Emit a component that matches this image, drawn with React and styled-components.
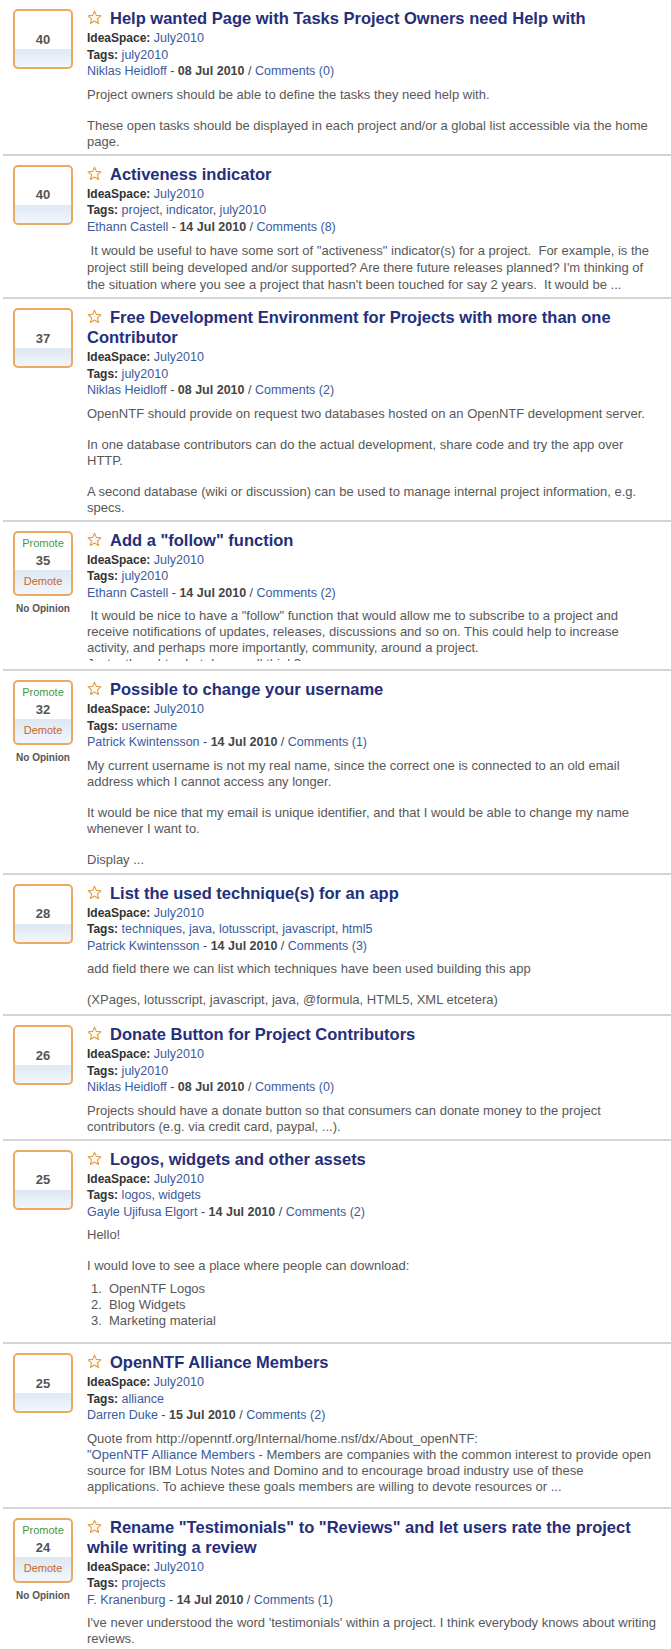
import React from "react";
import styled, { createGlobalStyle } from "styled-components";

const GlobalStyle = createGlobalStyle`
  html, body {
    margin: 0;
    padding: 0;
    background: #fff;
  }
  body {
    font-family: "Liberation Sans", Arial, sans-serif;
  }
`;

const List = styled.ul`
  list-style: none;
  margin: 0 0 0 3px;
  padding: 0;
`;

const Item = styled.li`
  display: flex;
  padding: 8px 14px 4px 0;
  border-bottom: 2px solid #d4d4d4;
`;

const VoteCol = styled.div`
  flex-shrink: 0;
  width: 60px;
  margin: 1px 14px 0 10px;
  display: flex;
  flex-direction: column;
  align-items: center;
`;

const VoteBox = styled.div`
  box-sizing: border-box;
  width: 60px;
  height: ${(p) => (p.$promo ? 65 : 60)}px;
  border: 2px solid #eaa964;
  border-radius: 5px;
  display: flex;
  flex-direction: column;
  background: linear-gradient(
    to bottom,
    #fff 0,
    #fff ${(p) => (p.$promo ? 37 : 38)}px,
    #dde8f3 ${(p) => (p.$promo ? 37 : 38)}px,
    #f1f6fb 100%
  );
`;

const Score = styled.div`
  flex: ${(p) => (p.$promo ? "0 0 auto" : "1")};
  display: flex;
  align-items: center;
  justify-content: center;
  font-size: 13px;
  line-height: 19px;
  font-weight: bold;
  color: #555;
`;

const VoteLink = styled.div`
  text-align: center;
  font-size: 11px;
  line-height: 16px;
  padding-top: ${(p) => (p.$kind === "up" ? "2px" : "3px")};
  color: ${(p) => (p.$kind === "up" ? "#3f9b3f" : "#c8652e")};
`;

const NoOpinion = styled.div`
  margin-top: 6px;
  font-size: 10px;
  line-height: 13px;
  font-weight: bold;
  color: #555;
  white-space: nowrap;
`;

const Content = styled.div`
  flex: 1;
  min-width: 0;
`;

const Title = styled.h2`
  margin: 0;
  font-size: 16.5px;
  line-height: 20px;
  font-weight: bold;
  color: #252e7a;
`;

const StarIcon = styled.svg`
  width: 15px;
  height: 15px;
  margin-right: 8px;
  vertical-align: -1px;
`;

const Meta = styled.div`
  margin-top: 2px;
  font-size: 12.5px;
  line-height: 16.5px;
  color: #444;
`;

const Label = styled.b`
  font-size: 12px;
  color: #333;
`;

const Link = styled.a`
  color: #3b5a9e;
  text-decoration: none;
`;

const DateText = styled.b`
  color: #444;
`;

const Body = styled.div`
  margin: 7px 0 ${(p) => p.$after || 0}px;
  font-size: 13px;
  line-height: ${(p) => p.$lh || 16}px;
  color: #585858;
  max-height: ${(p) => (p.$clip ? `${p.$clip}px` : "none")};
  overflow: hidden;
`;

const Para = styled.p`
  margin: 0 0 ${(p) => (p.$tight ? 7 : 15)}px;
  &:last-child {
    margin-bottom: 0;
  }
`;

const OList = styled.ol`
  list-style: none;
  counter-reset: num;
  margin: 0 0 9px;
  padding: 0;
`;

const OItem = styled.li`
  counter-increment: num;
  &:before {
    content: counter(num) ".";
    display: inline-block;
    width: 18px;
    padding-left: 4px;
  }
`;

const Star = () => (
  <StarIcon viewBox="0 0 24 24">
    <polygon
      points="12,1.8 14.9,8.6 22.3,9.3 16.7,14.2 18.4,21.5 12,17.7 5.6,21.5 7.3,14.2 1.7,9.3 9.1,8.6"
      fill="#fffdf3"
      stroke="#e39b3e"
      strokeWidth="1.7"
      strokeLinejoin="round"
    />
  </StarIcon>
);

const Tags = ({ tags }) => (
  <>
    {tags.map((t, i) => (
      <React.Fragment key={t}>
        {i > 0 && ", "}
        <Link href="#">{t}</Link>
      </React.Fragment>
    ))}
  </>
);

const ideas = [
  {
    score: 40,
    title: "Help wanted Page with Tasks Project Owners need Help with",
    tags: ["july2010"],
    author: "Niklas Heidloff",
    date: "08 Jul 2010",
    comments: 0,
    body: (
      <>
        <Para>Project owners should be able to define the tasks they need help with.</Para>
        <Para>
          These open tasks should be displayed in each project and/or a global list accessible via the home page.
        </Para>
      </>
    ),
  },
  {
    score: 40,
    title: "Activeness indicator",
    tags: ["project", "indicator", "july2010"],
    author: "Ethann Castell",
    date: "14 Jul 2010",
    comments: 8,
    lh: 17,
    body: (
      <Para>
        {"\u00a0It would be useful to have some sort of \"activeness\" indicator(s) for a project.\u00a0 For example, is the project still being developed and/or supported? Are there future releases planned? I'm thinking of the situation where you see a project that hasn't been touched for say 2 years.\u00a0 It would be ..."}
      </Para>
    ),
  },
  {
    score: 37,
    title: "Free Development Environment for Projects with more than one Contributor",
    tags: ["july2010"],
    author: "Niklas Heidloff",
    date: "08 Jul 2010",
    comments: 2,
    body: (
      <>
        <Para>OpenNTF should provide on request two databases hosted on an OpenNTF development server.</Para>
        <Para>In one database contributors can do the actual development, share code and try the app over HTTP.</Para>
        <Para>A second database (wiki or discussion) can be used to manage internal project information, e.g. specs.</Para>
      </>
    ),
  },
  {
    score: 35,
    promo: true,
    title: "Add a \"follow\" function",
    tags: ["july2010"],
    author: "Ethann Castell",
    date: "14 Jul 2010",
    comments: 2,
    clip: 53,
    after: 4,
    body: (
      <Para>
        {"\u00a0It would be nice to have a \"follow\" function that would allow me to subscribe to a project and receive notifications of updates, releases, discussions and so on. This could help to increase activity, and perhaps more importantly, community, around a project."}
        <br />
        Just a thought, what do you all think?
      </Para>
    ),
  },
  {
    score: 32,
    promo: true,
    title: "Possible to change your username",
    tags: ["username"],
    author: "Patrick Kwintensson",
    date: "14 Jul 2010",
    comments: 1,
    after: 1,
    body: (
      <>
        <Para>
          My current username is not my real name, since the correct one is connected to an old email address which I cannot access any longer.
        </Para>
        <Para>
          It would be nice that my email is unique identifier, and that I would be able to change my name whenever I want to.
        </Para>
        <Para>Display ...</Para>
      </>
    ),
  },
  {
    score: 28,
    title: "List the used technique(s) for an app",
    tags: ["techniques", "java", "lotusscript", "javascript", "html5"],
    author: "Patrick Kwintensson",
    date: "14 Jul 2010",
    comments: 3,
    after: 2,
    body: (
      <>
        <Para>add field there we can list which techniques have been used building this app</Para>
        <Para>(XPages, lotusscript, javascript, java, @formula, HTML5, XML etcetera)</Para>
      </>
    ),
  },
  {
    score: 26,
    title: "Donate Button for Project Contributors",
    tags: ["july2010"],
    author: "Niklas Heidloff",
    date: "08 Jul 2010",
    comments: 0,
    body: (
      <Para>
        Projects should have a donate button so that consumers can donate money to the project contributors (e.g. via credit card, paypal, ...).
      </Para>
    ),
  },
  {
    score: 25,
    title: "Logos, widgets and other assets",
    tags: ["logos", "widgets"],
    author: "Gayle Ujifusa Elgort",
    date: "14 Jul 2010",
    comments: 2,
    body: (
      <>
        <Para>Hello!</Para>
        <Para $tight>I would love to see a place where people can download:</Para>
        <OList>
          <OItem>OpenNTF Logos</OItem>
          <OItem>Blog Widgets</OItem>
          <OItem>Marketing material</OItem>
        </OList>
      </>
    ),
  },
  {
    score: 25,
    title: "OpenNTF Alliance Members",
    tags: ["alliance"],
    author: "Darren Duke",
    date: "15 Jul 2010",
    comments: 2,
    after: 8,
    body: (
      <Para>
        Quote from http://openntf.org/Internal/home.nsf/dx/About_openNTF:
        <br />
        <Link href="#">"OpenNTF Alliance Members</Link> - Members are companies with the common interest to provide open
        source for IBM Lotus Notes and Domino and to encourage broad industry use of these applications. To achieve these
        goals members are willing to devote resources or ...
      </Para>
    ),
  },
  {
    score: 24,
    promo: true,
    title: "Rename \"Testimonials\" to \"Reviews\" and let users rate the project while writing a review",
    tags: ["projects"],
    author: "F. Kranenburg",
    date: "14 Jul 2010",
    comments: 1,
    body: (
      <Para>
        I've never understood the word 'testimonials' within a project. I think everybody knows about writing reviews.
      </Para>
    ),
  },
];

const Vote = ({ score, promo }) => (
  <VoteCol>
    <VoteBox $promo={promo}>
      {promo && <VoteLink $kind="up">Promote</VoteLink>}
      <Score $promo={promo}>{score}</Score>
      {promo && <VoteLink $kind="down">Demote</VoteLink>}
    </VoteBox>
    {promo && <NoOpinion>No Opinion</NoOpinion>}
  </VoteCol>
);

export default function App() {
  return (
    <>
      <GlobalStyle />
      <List>
        {ideas.map((idea, i) => (
          <Item key={i}>
            <Vote score={idea.score} promo={idea.promo} />
            <Content>
              <Title>
                <Star />
                {idea.title}
              </Title>
              <Meta>
                <div>
                  <Label>IdeaSpace:</Label> <Link href="#">July2010</Link>
                </div>
                <div>
                  <Label>Tags:</Label> <Tags tags={idea.tags} />
                </div>
                <div>
                  <Link href="#">{idea.author}</Link> - <DateText>{idea.date}</DateText> /{" "}
                  <Link href="#">Comments ({idea.comments})</Link>
                </div>
              </Meta>
              <Body $lh={idea.lh} $clip={idea.clip} $after={idea.after}>
                {idea.body}
              </Body>
            </Content>
          </Item>
        ))}
      </List>
    </>
  );
}
